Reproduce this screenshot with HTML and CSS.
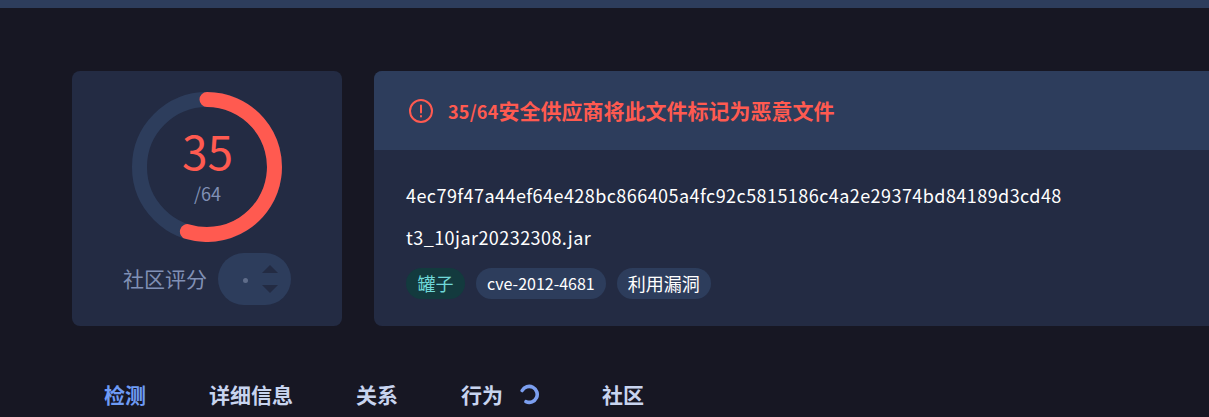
FILE: index.html
```html
<!DOCTYPE html>
<html lang="zh">
<head>
<meta charset="utf-8">
<title>文件检测</title>
<link rel="stylesheet" href="styles.css">
</head>
<body>
<div class="topbar"></div>
<main class="page">
  <section class="cards">
    <aside class="score-card">
      <div class="ring">
        <svg class="ring-svg" width="150" height="150" viewBox="0 0 150 150">
          <circle cx="75" cy="75" r="67.5" fill="none" stroke="#2d3d5c" stroke-width="15"/>
          <path d="M75 7.5 A67.5 67.5 0 1 1 55.4 139.6" fill="none" stroke="#ff5a50" stroke-width="15" stroke-linecap="round"/>
        </svg>
        <div class="ring-text">
          <div class="ring-num">35</div>
          <div class="ring-total">/64</div>
        </div>
      </div>
      <div class="community">
        <span class="community-label">社区评分</span>
        <div class="stepper">
          <span class="stepper-dot"></span>
          <div class="arrows">
            <span class="arrow-up"></span>
            <span class="arrow-down"></span>
          </div>
        </div>
      </div>
    </aside>
    <article class="info-card">
      <header class="alert">
        <svg class="alert-icon" width="24" height="24" viewBox="0 0 24 24" fill="none" stroke="#ff5a50" stroke-width="2" stroke-linecap="round">
          <circle cx="12" cy="12" r="11"/>
          <path d="M12 6.5v7M12 17v.5"/>
        </svg>
        <h1 class="alert-text"><span class="alert-count">35/64</span>安全供应商将此文件标记为恶意文件</h1>
      </header>
      <div class="details">
        <div class="hash">4ec79f47a44ef64e428bc866405a4fc92c5815186c4a2e29374bd84189d3cd48</div>
        <div class="filename">t3_10jar20232308.jar</div>
        <div class="tags">
          <span class="tag tag-green">罐子</span>
          <span class="tag">cve-2012-4681</span>
          <span class="tag tag-cjk">利用漏洞</span>
        </div>
      </div>
    </article>
  </section>
  <nav class="tabs">
    <a class="tab tab-active">检测</a>
    <a class="tab">详细信息</a>
    <a class="tab">关系</a>
    <a class="tab tab-loading">行为
      <svg class="spinner" width="20" height="21" viewBox="0 0 20 21" fill="none" stroke="#7c9ff0" stroke-width="3.6" stroke-linecap="round">
        <path d="M2.2 6.5 A8 8 0 1 1 6 17.7"/>
      </svg>
    </a>
    <a class="tab">社区</a>
  </nav>
</main>
</body>
</html>
```

FILE: styles.css
```css
* { box-sizing: border-box; }
html, body { margin: 0; height: 417px; overflow: hidden; }
body {
  background: #171723;
  font-family: "Noto Sans CJK SC", "Noto Sans", sans-serif;
  color: #fff;
}
.topbar { height: 8px; background: #2d3d5c; }
.page { padding: 63px 0 0 72px; }
.cards { display: flex; gap: 32px; width: 1300px; height: 255px; }
.score-card {
  flex: 0 0 270px;
  background: #232b43;
  border-radius: 8px;
  display: flex;
  flex-direction: column;
  align-items: center;
  padding-top: 21px;
}
.ring { position: relative; width: 150px; height: 150px; }
.ring-svg { display: block; }
.ring-text {
  position: absolute;
  inset: 0;
  display: flex;
  flex-direction: column;
  align-items: center;
  justify-content: center;
  padding-bottom: 3px;
}
.ring-num { font-size: 46px; line-height: 46px; color: #ff5a50; padding-left: 1px; }
.ring-total { font-size: 18px; line-height: 24px; color: #8090b5; padding-left: 1px; margin-top: 8px; }
.community { display: flex; align-items: center; gap: 11px; margin-top: 11px; }
.community-label { font-size: 21px; line-height: 52px; color: #8090b5; position: relative; top: -1px; }
.stepper {
  width: 73px;
  height: 52px;
  border-radius: 26px;
  background: #2d3d5c;
  display: flex;
  align-items: center;
  padding-left: 25px;
}
.stepper-dot { width: 5px; height: 5px; border-radius: 50%; background: #5f6d8a; position: relative; top: 1px; }
.arrows { display: flex; flex-direction: column; gap: 12px; margin-left: 14px; }
.arrow-up, .arrow-down { width: 0; height: 0; border-left: 8px solid transparent; border-right: 8px solid transparent; }
.arrow-up { border-bottom: 8px solid #232b43; }
.arrow-down { border-top: 8px solid #232b43; }
.info-card {
  flex: 1;
  background: #232b43;
  border-radius: 8px;
  overflow: hidden;
}
.alert {
  height: 79px;
  background: #2d3d5c;
  display: flex;
  align-items: center;
  padding-left: 35px;
  gap: 15px;
}
.alert-icon { display: block; flex: none; }
.alert-text { margin: -1px 0 0; font-size: 21px; font-weight: 700; color: #ff5a50; line-height: 30px; }
.alert-count { font-size: 18px; letter-spacing: 0.2px; }
.details { padding: 32px 32px 0; }
.hash, .filename { font-size: 18px; line-height: 27px; letter-spacing: 0.44px; }
.filename { margin-top: 15px; }
.tags { display: flex; gap: 11px; margin-top: 17px; }
.tag {
  height: 31px;
  padding: 0 11px;
  border-radius: 16px;
  background: #2d3d5c;
  font-size: 16px;
  line-height: 31px;
}
.tag-green { background: #133a3e; color: #6fd8d8; font-size: 18px; padding: 0 11.5px; }
.tag-cjk { font-size: 18px; }
.tabs { display: flex; gap: 63px; padding: 53px 0 0 32px; }
.tab { font-size: 21px; font-weight: 700; line-height: 30px; color: #c8d4ef; display: flex; align-items: center; }
.tab-active { color: #6e9bf5; }
.tab-loading { gap: 17px; margin-right: -1px; }
.spinner { display: block; }
```
